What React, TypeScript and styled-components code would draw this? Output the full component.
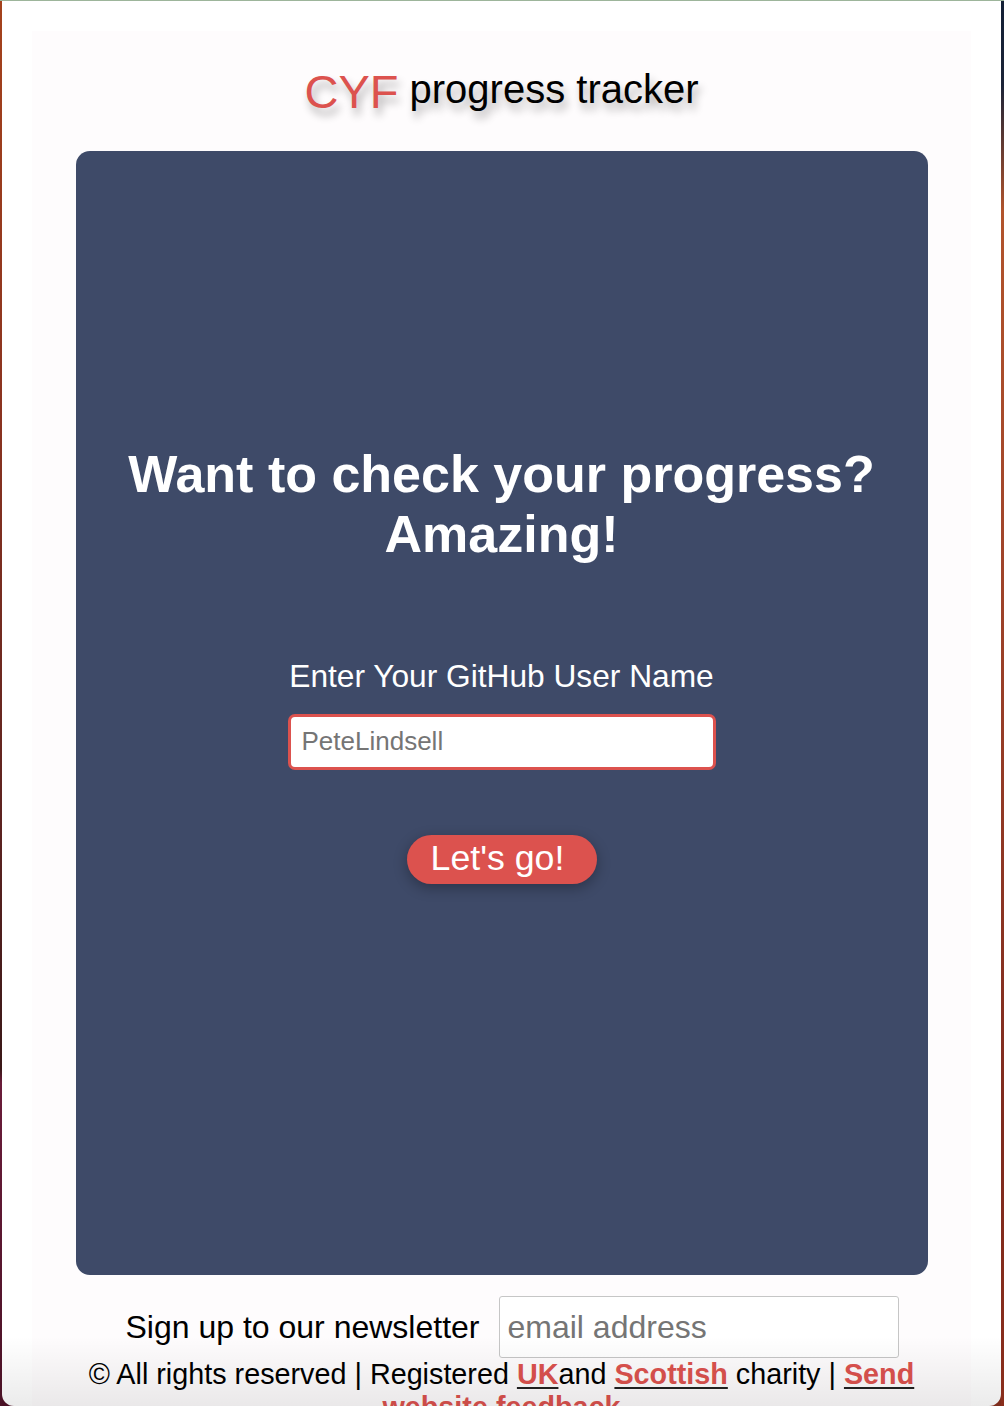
import React from "react";
import styled, { createGlobalStyle } from "styled-components";

const RED = "#dc524e";

const Global = createGlobalStyle`
  html, body {
    margin: 0;
    padding: 0;
    overflow: hidden;
  }
  body {
    font-family: "Liberation Sans", Arial, Helvetica, sans-serif;
  }
`;

const Desktop = styled.div`
  width: 1004px;
  height: 1406px;
  display: grid;
  grid-template-columns: 2px 1fr 3px;
  grid-template-rows: 1px 1fr;
  background: linear-gradient(to right, #4a1024 0%, #4a1024 50%, #7e2c1c 50%, #7e2c1c 100%);
`;

const TopLine = styled.div`
  grid-column: 1 / 4;
  background: #9db59b;
`;

const LeftEdge = styled.div`
  background: linear-gradient(
    to bottom,
    #a5421c 0%,
    #8a3320 30%,
    #5a2220 60%,
    #3a1818 76%,
    #6a1c3a 77%,
    #4a1226 100%
  );
`;

const RightEdge = styled.div`
  background: linear-gradient(
    to bottom,
    #132036 0%,
    #1c2438 6%,
    #b2542c 15%,
    #a0442a 40%,
    #7e2a1e 80%,
    #8a2e1c 100%
  );
`;

const Window = styled.div`
  position: relative;
  background: #ffffff;
  border-radius: 0 0 12px 12px;
  overflow: hidden;
  display: flex;
  flex-direction: column;
`;

const BottomFade = styled.div`
  position: absolute;
  left: 0;
  right: 0;
  bottom: 0;
  height: 70px;
  pointer-events: none;
  background: linear-gradient(to bottom, rgba(0, 0, 0, 0), rgba(0, 0, 0, 0.08));
`;

const Page = styled.div`
  margin: 30px 30px 0;
  flex: 1;
  background: #fefcfd;
  display: flex;
  flex-direction: column;
  align-items: center;
`;

const Header = styled.header`
  height: 120px;
  display: flex;
  align-items: center;
  justify-content: center;
`;

const Title = styled.h1`
  margin: 0;
  font-size: 40px;
  font-weight: 400;
  line-height: 48px;
  color: #000;
  text-shadow: 3px 7px 9px rgba(0, 0, 0, 0.32);
  padding-bottom: 4px;
`;

const Brand = styled.span`
  color: ${RED};
  font-size: 47px;
  vertical-align: -5px;
  line-height: 40px;
`;

const Card = styled.main`
  box-sizing: border-box;
  width: 852px;
  height: 1124px;
  background: #3e4a68;
  border-radius: 14px;
  display: flex;
  flex-direction: column;
  align-items: center;
  justify-content: center;
  padding-bottom: 97px;
  color: #fff;
`;

const Heading = styled.h2`
  margin: 0 0 93px;
  font-size: 52px;
  font-weight: 700;
  line-height: 1.15;
  text-align: center;
`;

const Label = styled.label`
  font-size: 31.7px;
  margin-bottom: 19px;
`;

const NameInput = styled.input`
  box-sizing: border-box;
  width: 428px;
  height: 56px;
  border: 3px solid ${RED};
  border-radius: 7px;
  padding: 0 11px;
  font-family: inherit;
  font-size: 26px;
  margin: 0 0 65px;
  background: #fff;
  outline: none;
  &::placeholder {
    color: #757575;
  }
`;

const GoButton = styled.button`
  box-sizing: border-box;
  width: 190px;
  height: 49px;
  border: none;
  border-radius: 25px;
  background: ${RED};
  color: #fff;
  font-family: inherit;
  font-size: 35.7px;
  padding: 0 0 2px;
  text-indent: -8px;
  box-shadow: 0 4px 14px rgba(0, 0, 0, 0.3);
  cursor: pointer;
`;

const Newsletter = styled.form`
  margin-top: 21px;
  display: flex;
  align-items: center;
  gap: 20px;
  padding-left: 22px;
`;

const NewsLabel = styled.span`
  font-size: 32px;
  color: #000;
`;

const EmailInput = styled.input`
  box-sizing: border-box;
  width: 400px;
  height: 62px;
  border: 1px solid #c6c6c6;
  border-radius: 3px;
  padding: 0 7px;
  font-family: inherit;
  font-size: 32px;
  background: #fff;
  outline: none;
  &::placeholder {
    color: #757575;
  }
`;

const Copyright = styled.p`
  margin: 0;
  width: 880px;
  font-size: 28.75px;
  line-height: 33px;
  text-align: center;
  color: #000;
`;

const Link = styled.a`
  color: ${RED};
  font-weight: 700;
  text-decoration: underline;
  text-decoration-color: #222;
  text-decoration-thickness: 2px;
  text-underline-offset: 3px;
`;

export default function App() {
  return (
    <>
      <Global />
      <Desktop>
        <TopLine />
        <LeftEdge />
        <Window>
          <Page>
            <Header>
              <Title>
                <Brand>CYF</Brand> progress tracker
              </Title>
            </Header>
            <Card>
              <Heading>
                Want to check your progress?
                <br />
                Amazing!
              </Heading>
              <Label htmlFor="gh">Enter Your GitHub User Name</Label>
              <NameInput id="gh" placeholder="PeteLindsell" />
              <GoButton type="button">Let's go!</GoButton>
            </Card>
            <Newsletter onSubmit={(e) => e.preventDefault()}>
              <NewsLabel>Sign up to our newsletter</NewsLabel>
              <EmailInput placeholder="email address" />
            </Newsletter>
            <Copyright>
              © All rights reserved | Registered <Link href="#">UK</Link>and{" "}
              <Link href="#">Scottish</Link> charity | <Link href="#">Send website feedback</Link>
            </Copyright>
          </Page>
          <BottomFade />
        </Window>
        <RightEdge />
      </Desktop>
    </>
  );
}
